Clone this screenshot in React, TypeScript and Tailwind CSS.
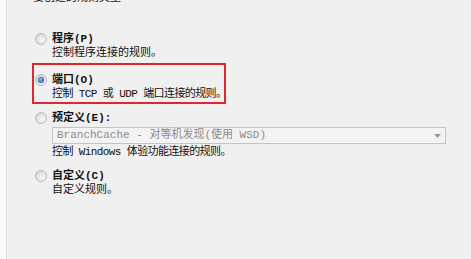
import type { ReactNode } from "react";

// Windows-style radio glyph
const Radio = ({ checked = false }: { checked?: boolean }) => (
  <svg width="12" height="12" viewBox="0 0 12 12" className="self-center">
    <defs>
      <radialGradient id="rOff" cx="0.62" cy="0.62" r="0.75">
        <stop offset="0" stopColor="#fbfbfb" />
        <stop offset="1" stopColor="#cdcdcd" />
      </radialGradient>
      <radialGradient id="rDot" cx="0.4" cy="0.35" r="0.8">
        <stop offset="0" stopColor="#8cc4f2" />
        <stop offset="1" stopColor="#1f5ea6" />
      </radialGradient>
    </defs>
    <circle cx="6" cy="6" r="5.5" fill="url(#rOff)" stroke="#bdbdbd" />
    {checked && <circle cx="6" cy="6" r="2.8" fill="url(#rDot)" stroke="#245a94" strokeWidth="0.6" />}
  </svg>
);

interface OptionProps {
  label: string;
  desc: string;
  checked?: boolean;
  tight?: boolean;
  className: string;
  children?: ReactNode;
}

const Option = ({ label, desc, checked, tight, className, children }: OptionProps) => (
  <div className={`border-2 pl-[1px] pb-[1px] grid grid-cols-[17px_1fr] ${className}`}>
    <Radio checked={checked} />
    <div className="font-bold leading-[14px]">{label}</div>
    {children && <div />}
    {children}
    <div />
    <div className={`leading-[14px] whitespace-nowrap ${tight ? "tracking-[-0.6px]" : ""}`}>{desc}</div>
  </div>
);

export default function App() {
  return (
    <div className="w-[471px] h-[259px] overflow-hidden flex bg-[#f0f0f0] text-[11px] text-[#111] font-[family-name:'Liberation_Mono','Noto_Sans_CJK_SC',monospace]">
      <div className="w-[7px] shrink-0 bg-[#fbfbfb] border-r border-[#e2e2e2]" />
      <div className="flex flex-col pl-[25px]">
        <div className="mt-[-9px] ml-[1px] leading-[14px]">要创建的规则类型</div>

        <Option label="程序(P)" desc="控制程序连接的规则。" className="mt-[25px] border-transparent" />

        <Option
          checked
          tight
          label="端口(O)"
          desc="控制 TCP 或 UDP 端口连接的规则。"
          className="w-[194px] pt-[8px] border-[#e0262f]"
        />

        <Option
          tight
          label="预定义(E):"
          desc="控制 Windows 体验功能连接的规则。"
          className="w-[416px] pt-[5px] border-transparent"
        >
          <div className="mt-[2px] mb-[1px] h-[17px] w-[394px] border border-[#c4c4c4] bg-[#f3f3f3] flex items-center justify-between pl-[4px] pr-[4px] text-[#8a8a8a] leading-[15px]">
            <span className="whitespace-nowrap">BranchCache - 对等机发现(使用 WSD)</span>
            <svg width="7" height="4" viewBox="0 0 7 4">
              <path d="M0 0 L7 0 L3.5 4 Z" fill="#9a9a9a" />
            </svg>
          </div>
        </Option>

        <Option label="自定义(C)" desc="自定义规则。" className="pt-[5px] border-transparent" />
      </div>
    </div>
  );
}
